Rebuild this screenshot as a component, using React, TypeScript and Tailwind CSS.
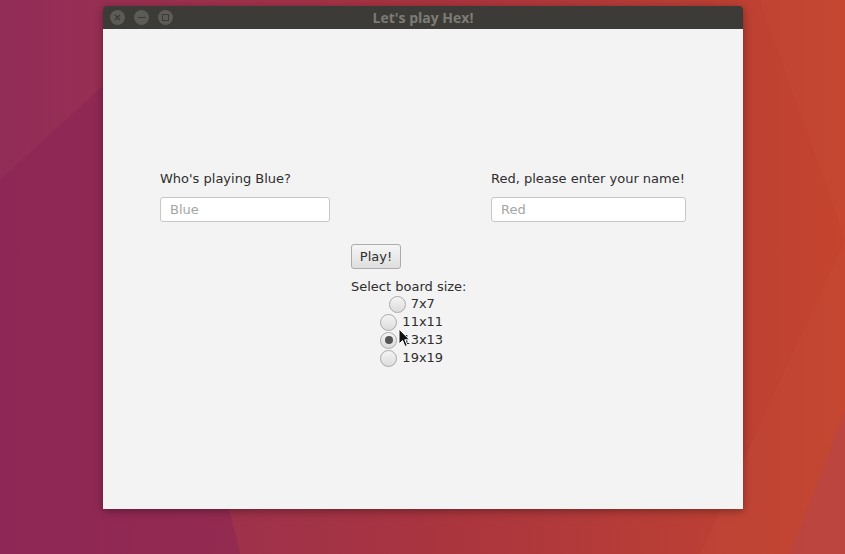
import { useState } from "react";

const sizes = ["7x7", "11x11", "13x13", "19x19"];

function Radio({ label, checked, onClick }: { label: string; checked: boolean; onClick: () => void }) {
  return (
    <div className="flex h-[18px] cursor-default items-center gap-[5px]" onClick={onClick}>
      <span className="flex h-[17px] w-[17px] items-center justify-center rounded-full border border-[#a9a9a9] bg-gradient-to-b from-[#f4f4f4] to-[#dcdcdc]">
        {checked && <span className="h-[8px] w-[8px] rounded-full bg-[#555]" />}
      </span>
      <span>{label}</span>
    </div>
  );
}

function Cursor() {
  return (
    <svg className="pointer-events-none absolute left-[398px] top-[328px]" width="13" height="20" viewBox="0 0 13 20">
      <path d="M1 1 L1 16 L4.5 12.5 L7 18.5 L9.3 17.5 L6.8 11.8 L11.5 11.8 Z" fill="#111" stroke="#fff" strokeWidth="1" strokeLinejoin="round" />
    </svg>
  );
}

export default function App() {
  const [size, setSize] = useState("13x13");

  return (
    <div className="relative h-[554px] w-[845px] overflow-hidden bg-gradient-to-r from-[#922c58] via-[#a8343f] to-[#c4442d] pl-[103px] pt-[6px]">
      {/* wallpaper facets */}
      <svg className="absolute inset-0" width="845" height="554" viewBox="0 0 845 554">
        <polygon points="0,554 0,180 120,70 240,554" fill="#8a2454" opacity="0.55" />
        <polygon points="760,0 845,0 845,554 700,554 845,240" fill="#c9503a" opacity="0.25" />
        <polygon points="790,554 845,410 845,554" fill="#b8444a" opacity="0.6" />
      </svg>

      {/* WINDOW */}
      <div className="relative flex h-[503px] w-[640px] flex-col overflow-hidden rounded-t-[4px] shadow-[0_2px_8px_rgba(0,0,0,0.35)]">
        <div className="relative flex h-[23px] items-center bg-[#3c3b37] px-[7px]">
          <div className="flex gap-[9px]">
            <span className="flex h-[15px] w-[15px] items-center justify-center rounded-full bg-[#5c5b56]">
              <svg width="7" height="7" viewBox="0 0 7 7"><path d="M1 1 L6 6 M6 1 L1 6" stroke="#3c3b37" strokeWidth="1.4" /></svg>
            </span>
            <span className="flex h-[15px] w-[15px] items-center justify-center rounded-full bg-[#5c5b56]">
              <span className="h-[1.5px] w-[8px] bg-[#3c3b37]" />
            </span>
            <span className="flex h-[15px] w-[15px] items-center justify-center rounded-full bg-[#5c5b56]">
              <span className="h-[7px] w-[7px] border-[1.5px] border-[#3c3b37]" />
            </span>
          </div>
          <div className="absolute inset-0 flex items-center justify-center font-['Open_Sans',sans-serif] text-[14px] font-bold text-[#7d7b76]">
            Let's play Hex!
          </div>
        </div>

        <div className="flex flex-1 flex-col bg-[#f3f3f3] pt-[142px] font-['DejaVu_Sans',sans-serif] text-[13px] text-[#2e2e2e]">
          <div className="flex pl-[57px]">
            <div className="flex w-[170px] flex-col gap-[10px]">
              <span className="leading-[16px]">Who's playing Blue?</span>
              <input
                placeholder="Blue"
                className="h-[25px] w-full rounded-[3px] border border-[#c6c6c6] bg-white px-[9px] text-[13px] outline-none placeholder:text-[#a5a5a5]"
              />
            </div>
            <div className="ml-[161px] flex w-[195px] flex-col gap-[10px]">
              <span className="leading-[16px]">Red, please enter your name!</span>
              <input
                placeholder="Red"
                className="h-[25px] w-full rounded-[3px] border border-[#c6c6c6] bg-white px-[9px] text-[13px] outline-none placeholder:text-[#a5a5a5]"
              />
            </div>
          </div>

          <div className="ml-[248px] mt-[22px] flex flex-col items-start">
            <button className="h-[25px] w-[50px] rounded-[3px] border border-[#acacac] bg-gradient-to-b from-[#f6f6f6] to-[#dedede] text-[13px] text-[#2e2e2e]">
              Play!
            </button>
            <div className="mt-[10px] flex flex-col items-center">
              <span className="leading-[16px]">Select board size:</span>
              <div className="flex flex-col items-center pl-[6px]">
                {sizes.map((s) => (
                  <Radio key={s} label={s} checked={size === s} onClick={() => setSize(s)} />
                ))}
              </div>
            </div>
          </div>
        </div>
      </div>

      <Cursor />
    </div>
  );
}
